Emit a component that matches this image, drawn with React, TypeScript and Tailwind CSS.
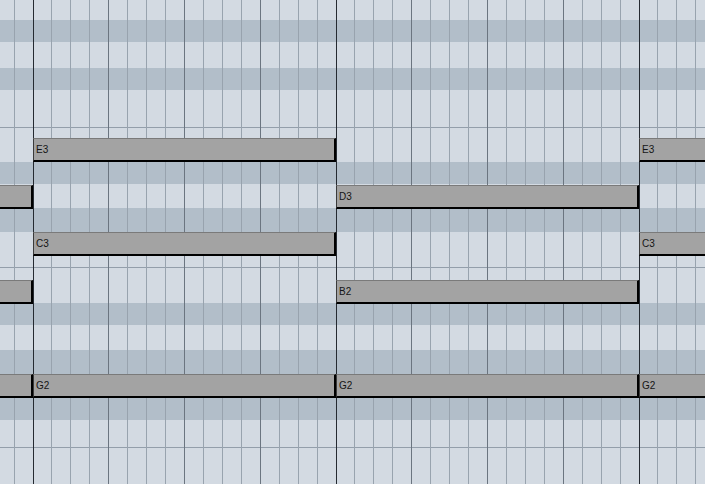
const BAR = 303;
const ORIGIN = 33;

// background bands from top to bottom: height, dark, line at the bottom
const BANDS: { h: number; dark?: boolean; line?: boolean }[] = [
  { h: 20 },
  { h: 22, dark: true },
  { h: 26 },
  { h: 22, dark: true },
  { h: 38, line: true },
  { h: 34 },
  { h: 22, dark: true },
  { h: 24 },
  { h: 24, dark: true },
  { h: 36, line: true },
  { h: 35 },
  { h: 22, dark: true },
  { h: 25 },
  { h: 70, dark: true },
  { h: 28, line: true },
  { h: 36 },
];

// start in bars, top in px
const NOTES = [
  { name: "E3", bar: 0, top: 138 },
  { name: "E3", bar: 2, top: 138 },
  { name: "D3", bar: -1, top: 185 },
  { name: "D3", bar: 1, top: 185 },
  { name: "C3", bar: 0, top: 232 },
  { name: "C3", bar: 2, top: 232 },
  { name: "B2", bar: -1, top: 280 },
  { name: "B2", bar: 1, top: 280 },
  { name: "G2", bar: -1, top: 374 },
  { name: "G2", bar: 0, top: 374 },
  { name: "G2", bar: 1, top: 374 },
  { name: "G2", bar: 2, top: 374 },
];

const GridLines = () => {
  const lines = [];
  for (let i = -2; i <= 38; i++) {
    const x = Math.floor(ORIGIN + (i * BAR) / 16) + 0.5;
    const stroke = i % 16 === 0 ? "#252a31" : i % 4 === 0 ? "#6b7580" : "#98a3ae";
    lines.push(<line key={i} x1={x} y1={0} x2={x} y2={484} stroke={stroke} strokeWidth={1} />);
  }
  return (
    <svg className="absolute inset-0" width={705} height={484}>
      {lines}
    </svg>
  );
};

export default function App() {
  return (
    <div className="relative w-[705px] h-[484px] overflow-hidden bg-[#d3dae2] font-['Liberation_Sans',Arial,sans-serif]">
      <div className="flex flex-col">
        {BANDS.map((b, i) => (
          <div
            key={i}
            className={`shrink-0 ${b.dark ? "bg-[#b2bec9]" : "bg-[#d3dae2]"} ${b.line ? "border-b border-[#939eaa]" : ""}`}
            style={{ height: b.h }}
          />
        ))}
      </div>
      <GridLines />
      {NOTES.map((n, i) => {
        const left = ORIGIN + n.bar * BAR;
        return (
          <div
            key={i}
            className="absolute flex h-[24px] items-center border-t border-l border-b-2 border-r-2 border-t-[#7a7a7a] border-l-[#3a3a3a] border-b-black border-r-black bg-[#a3a3a3] pl-[2px] text-[10px] leading-none text-[#151515]"
            style={{ left, top: n.top, width: BAR }}
          >
            {left >= 0 ? n.name : null}
          </div>
        );
      })}
    </div>
  );
}
